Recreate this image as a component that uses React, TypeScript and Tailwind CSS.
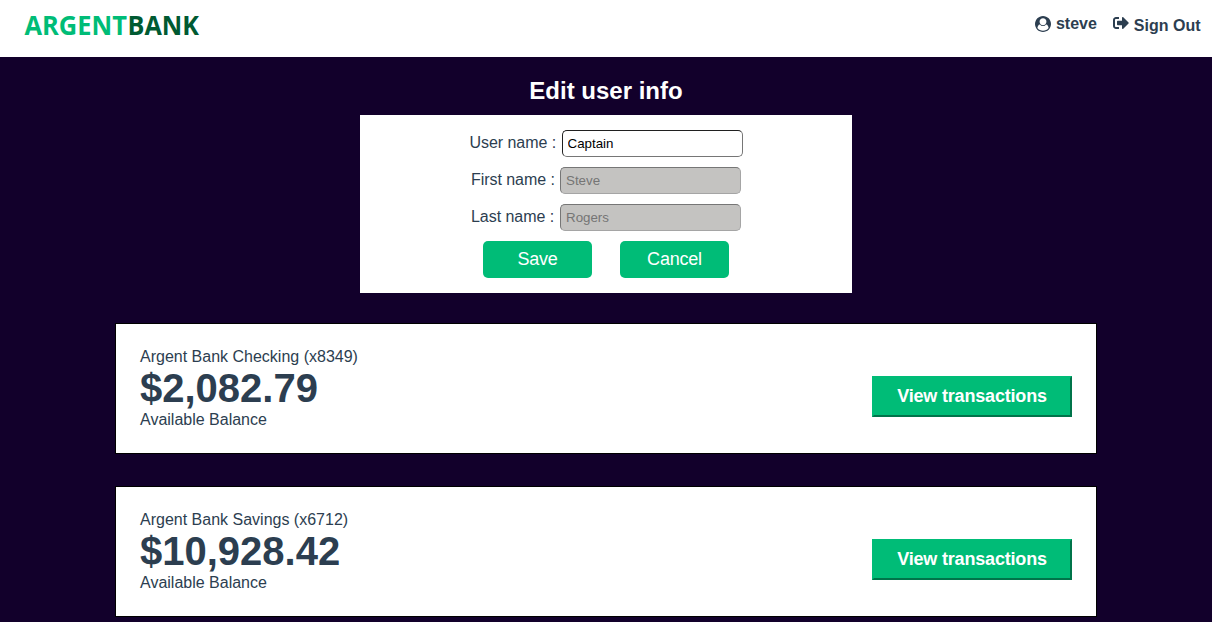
import { FaSignOutAlt } from "react-icons/fa";

const accounts = [
  { name: "Argent Bank Checking (x8349)", amount: "$2,082.79" },
  { name: "Argent Bank Savings (x6712)", amount: "$10,928.42" },
];

function Logo() {
  return (
    <svg width="230" height="56" viewBox="0 0 230 56" role="img" aria-label="Argent Bank">
      <text x="24.500" y="35.300" textLength="102.500" lengthAdjust="spacingAndGlyphs" className="fill-[#00bc77] text-[27px] font-bold font-['Open_Sans','Noto_Sans',sans-serif]">
        ARGENT
      </text>
      <text x="127.500" y="35.300" textLength="71.500" lengthAdjust="spacingAndGlyphs" className="fill-[#005a32] text-[27px] font-bold font-['Open_Sans','Noto_Sans',sans-serif]">
        BANK
      </text>
    </svg>
  );
}

function UserIcon() {
  return (
    <svg width="16" height="16" viewBox="0 0 1792 1792" fill="currentColor" fillRule="evenodd">
      <path d="M1523 1339q-22-155-87.500-257.500t-184.500-118.500q-67 74-159.500 115.500t-195.500 41.500-195.500-41.500-159.500-115.500q-119 16-184.500 118.500t-87.500 257.500q106 150 271 237.500t356 87.500 356-87.500 271-237.500zm-243-699q0-159-112.500-271.500t-271.500-112.500-271.500 112.500-112.500 271.500 112.500 271.500 271.500 112.500 271.500-112.500 112.500-271.500zm512 256q0 182-71 347.500t-190.500 286-285.500 191.500-349 71-349-71-285.500-191.500-190.500-286-71-347.500 71-348 191-286 286-191 348-71 348 71 286 191 191 286 71 348z" />
    </svg>
  );
}

export default function App() {
  return (
    <div className="h-[622px] overflow-hidden bg-[#12002b] font-['Liberation_Sans',Arial,sans-serif] text-base text-[#2c3e50]">
      <nav className="flex h-[57px] items-start justify-between bg-white pr-[11.500px] font-bold">
        <Logo />
        <div className="flex">
          <a className="mt-[14px] flex h-[19px] items-center gap-[5px] leading-[19px]">
            <UserIcon />
            steve
          </a>
          <a className="mt-4 ml-4 flex h-[19px] items-start gap-[5px] leading-[19px]">
            <FaSignOutAlt className="-mt-px" />
            Sign Out
          </a>
        </div>
      </nav>
      <main>
        <h1 className="pt-5 text-center text-2xl leading-7 font-bold text-white">Edit user info</h1>
        <form className="mx-auto mt-[10px] flex h-[178px] w-[492px] flex-col items-center gap-[10px] bg-white pt-[15px]">
          <div className="flex h-[27px] items-center gap-[6px]">
            <label className="w-[86px] pb-[2px] whitespace-nowrap tracking-[-0.05px]">User name :</label>
            <input defaultValue="Captain" className="h-[27px] w-[181px] rounded-[5px] border border-t-[#202020] border-r-[#767676] border-b-[#767676] border-l-[#202020] px-[5px] text-[13.333px] text-black outline-none" />
          </div>
          <div className="flex h-[27px] items-center gap-[6px]">
            <label className="w-[83px] pb-[2px] whitespace-nowrap tracking-[-0.05px]">First name :</label>
            <input disabled placeholder="Steve" className="h-[27px] w-[181px] rounded-[5px] border border-t-[#767676] border-r-[#a5a5a5] border-b-[#a5a5a5] border-l-[#767676] bg-[#c4c3c1] px-[5px] text-[13.333px] placeholder:text-[#757575]" />
          </div>
          <div className="flex h-[27px] items-center gap-[6px]">
            <label className="w-[83px] pb-[2px] whitespace-nowrap tracking-[-0.05px]">Last name :</label>
            <input disabled placeholder="Rogers" className="h-[27px] w-[181px] rounded-[5px] border border-t-[#767676] border-r-[#a5a5a5] border-b-[#a5a5a5] border-l-[#767676] bg-[#c4c3c1] px-[5px] text-[13.333px] placeholder:text-[#757575]" />
          </div>
          <div className="flex gap-7">
            <button type="button" className="h-[37px] w-[109px] rounded-[5px] bg-[#00bc77] pb-px text-lg leading-none tracking-[-0.2px] text-white">Save</button>
            <button type="button" className="h-[37px] w-[109px] rounded-[5px] bg-[#00bc77] pb-px text-lg leading-none tracking-[-0.2px] text-white">Cancel</button>
          </div>
        </form>
        <div className="mt-[30px] flex flex-col items-center gap-8">
          {accounts.map((a) => (
            <section key={a.name} className="flex h-[131px] w-[982px] items-center justify-between border border-black bg-white px-6">
              <div>
                <h3 className="leading-[18px]">{a.name}</h3>
                <p className="text-[40px] leading-[45px] font-bold">{a.amount}</p>
                <p className="leading-[18px]">Available Balance</p>
              </div>
              <button type="button" className="mt-[15px] h-[41px] w-[200px] border-2 border-t-[#00bc77] border-r-[#00744a] border-b-[#00744a] border-l-[#00bc77] bg-[#00bc77] text-lg leading-none font-bold tracking-[-0.18px] text-white">
                View transactions
              </button>
            </section>
          ))}
        </div>
      </main>
    </div>
  );
}
